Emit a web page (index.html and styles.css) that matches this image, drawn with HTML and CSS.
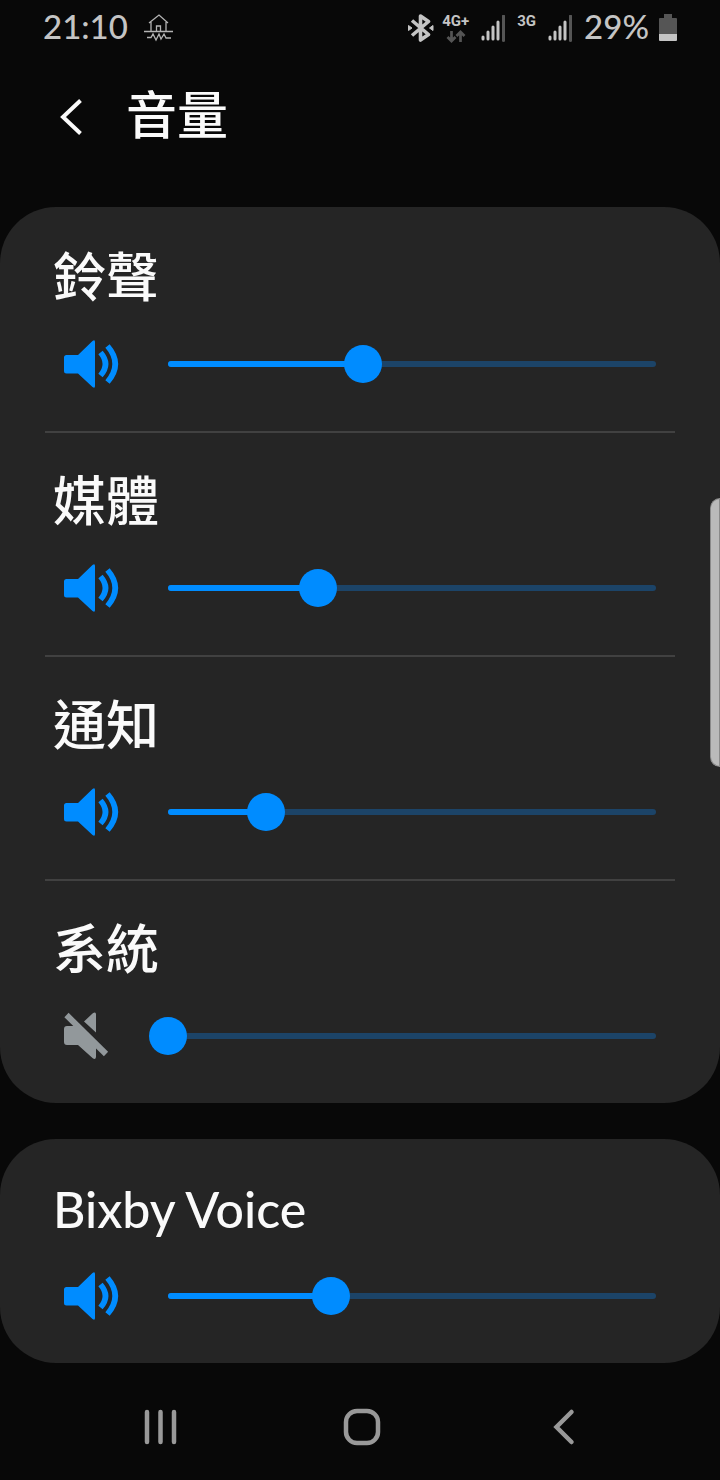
FILE: index.html
```html
<!DOCTYPE html>
<html lang="zh-Hant">
<head>
<meta charset="utf-8">
<meta name="viewport" content="width=device-width, initial-scale=1">
<title>音量</title>
<link rel="stylesheet" href="styles.css">
</head>
<body>
<svg class="defs" aria-hidden="true">
  <symbol id="speaker" viewBox="0 0 56 48">
    <path d="M2.500 15H14L28.500 1Q31 -1 31 2V46Q31 49 28.500 47L14 33.500H2.500Q0 33.500 0 31V17.500Q0 15 2.500 15Z" fill="currentColor"/>
    <path d="M36.500 12.500Q46.500 24 36.500 35.500M43.500 6Q59 24 43.500 42" fill="none" stroke="currentColor" stroke-width="5.700"/>
  </symbol>
  <symbol id="muted" viewBox="0 0 56 48">
    <path d="M20 9.500L28.500 1.500Q32 -1 32 2.500V20.500ZM3 14H11L32 35V45Q31.500 48.500 28.500 46L14 33H3Q0 33 0 30V17Q0 14 3 14Z" fill="currentColor"/>
    <path d="M2.500 3L42 42" fill="none" stroke="currentColor" stroke-width="6"/>
  </symbol>
  <symbol id="signal" viewBox="0 0 24 27">
    <path d="M2 24V22M7 24V17M12 24V12M17 24V7" fill="none" stroke="#c4c4c4" stroke-width="3" stroke-linecap="round"/>
    <path d="M22.500 25.500V1" fill="none" stroke="#555" stroke-width="3" stroke-linecap="round"/>
  </symbol>
</svg>

<header class="status">
  <span class="clock">21:10</span>
  <svg class="quake" viewBox="0 0 30 28" aria-hidden="true">
    <path d="M5 9L15 1L24 9M7 7V17M22 7V17M12.500 17V12H16.500V17M0 17.500H29M3 23.500H7L9 20L12 26L15 20L17 25L20 20L22 24H27" fill="none" stroke="#b4b4b4" stroke-width="1.300"/>
  </svg>
  <div class="status-right">
    <svg class="bluetooth" viewBox="0 0 26 28" aria-hidden="true">
      <path d="M4 6.500L20.500 20.500L12.500 26V2L20.500 7.500L4 21.500" fill="none" stroke="#c4c4c4" stroke-width="3.600" stroke-linejoin="round"/>
      <path d="M0.500 11.500L4 14L0.500 16.500ZM25 11.500L21.500 14L25 16.500Z" fill="#c4c4c4" stroke="#c4c4c4"/>
    </svg>
    <div class="network">
      <span>4G+</span>
      <svg class="arrows" viewBox="0 0 20 13" aria-hidden="true">
        <path d="M5.500 1V11M1.500 7L5.500 11L9.500 7M14.500 12V2M10.500 6L14.500 2L18.500 6" fill="none" stroke="#555" stroke-width="2.700"/>
      </svg>
    </div>
    <svg class="signal" aria-hidden="true"><use href="#signal"/></svg>
    <div class="network"><span>3G</span></div>
    <svg class="signal" aria-hidden="true"><use href="#signal"/></svg>
    <span class="percent">29%</span>
    <svg class="battery" viewBox="0 0 18 28" aria-hidden="true">
      <path d="M5 0H13V4H17Q18 4 18 5V20H0V5Q0 4 1 4H5Z" fill="#555"/>
      <path d="M0 20H18V26Q18 27 17 27H1Q0 27 0 26Z" fill="#c4c4c4"/>
    </svg>
  </div>
</header>

<div class="titlebar">
  <button class="back" type="button" aria-label="返回">
    <svg viewBox="0 0 24 36" aria-hidden="true"><path d="M20.500 1.500L3 18L20.500 34.500" fill="none" stroke="#fafafa" stroke-width="4"/></svg>
  </button>
  <h1>音量</h1>
</div>

<main>
  <section class="card">
    <div class="row">
      <label for="ring">鈴聲</label>
      <div class="control">
        <svg class="icon" aria-hidden="true"><use href="#speaker"/></svg>
        <div class="slider">
          <div class="rail"><div class="fill" style="width:40%"></div></div>
          <input id="ring" type="range" max="150" value="60">
        </div>
      </div>
    </div>
    <div class="row">
      <label for="media">媒體</label>
      <div class="control">
        <svg class="icon" aria-hidden="true"><use href="#speaker"/></svg>
        <div class="slider">
          <div class="rail"><div class="fill" style="width:30.67%"></div></div>
          <input id="media" type="range" max="150" value="46">
        </div>
      </div>
    </div>
    <div class="row">
      <label for="notice">通知</label>
      <div class="control">
        <svg class="icon" aria-hidden="true"><use href="#speaker"/></svg>
        <div class="slider">
          <div class="rail"><div class="fill" style="width:20%"></div></div>
          <input id="notice" type="range" max="150" value="30">
        </div>
      </div>
    </div>
    <div class="row">
      <label for="system">系統</label>
      <div class="control">
        <svg class="icon icon-muted" aria-hidden="true"><use href="#muted"/></svg>
        <div class="slider">
          <div class="rail"><div class="fill" style="width:0%"></div></div>
          <input id="system" type="range" max="150" value="0">
        </div>
      </div>
    </div>
  </section>
  <section class="card">
    <div class="row">
      <label class="latin" for="bixby">Bixby Voice</label>
      <div class="control">
        <svg class="icon" aria-hidden="true"><use href="#speaker"/></svg>
        <div class="slider">
          <div class="rail"><div class="fill" style="width:33.33%"></div></div>
          <input id="bixby" type="range" max="150" value="50">
        </div>
      </div>
    </div>
  </section>
</main>

<nav class="navbar">
  <button type="button" aria-label="最近使用">
    <svg viewBox="0 0 40 40" aria-hidden="true"><path d="M7 5V35M20.500 5V35M34 5V35" fill="none" stroke="#999" stroke-width="4.500" stroke-linecap="round"/></svg>
  </button>
  <button type="button" aria-label="首頁">
    <svg viewBox="0 0 40 40" aria-hidden="true"><rect x="4" y="4" width="32" height="32" rx="11" fill="none" stroke="#999" stroke-width="4.500"/></svg>
  </button>
  <button type="button" aria-label="返回">
    <svg viewBox="0 0 40 40" aria-hidden="true"><path d="M27.500 5L12.500 20L27.500 35" fill="none" stroke="#999" stroke-width="4.500" stroke-linecap="round"/></svg>
  </button>
</nav>
<div class="edge-handle"></div>
</body>
</html>
```
FILE: styles.css
```css
* { box-sizing: border-box; }

body {
  position: relative;
  margin: 0;
  background: #080808;
  color: #fafafa;
  font-family: Lato, "Noto Sans CJK TC", sans-serif;
}

svg { display: block; flex: none; }
.defs { position: absolute; width: 0; height: 0; }

button {
  display: flex;
  align-items: center;
  justify-content: center;
  padding: 0;
  border: 0;
  background: none;
}

.status {
  display: flex;
  align-items: center;
  height: 56px;
  padding: 0 43px;
  color: #c4c4c4;
}
.clock, .percent {
  padding-bottom: 4px;
  font-size: 33px;
  line-height: 52px;
  font-weight: 500;
}
.quake { width: 30px; height: 28px; margin-left: 16px; }
.status-right {
  display: flex;
  align-items: center;
  margin-left: auto;
}
.bluetooth { width: 26px; height: 28px; margin-right: 8px; }
.network {
  display: flex;
  flex-direction: column;
  align-items: center;
  height: 30px;
  font: bold 15px/16px Roboto, sans-serif;
}
.arrows { width: 20px; height: 13px; margin-top: 1px; }
.signal { width: 24px; height: 27px; margin: 0 12px; }
.percent { margin-right: 10px; }
.battery { width: 18px; height: 28px; }

.titlebar {
  display: flex;
  align-items: center;
  height: 151px;
  padding: 0 60px 30px;
}
.back svg { width: 24px; height: 36px; }
h1 {
  margin: 0 0 0 42px;
  padding-bottom: 4px;
  font-size: 51px;
  line-height: 64px;
  font-weight: 500;
}

main {
  display: flex;
  flex-direction: column;
  gap: 36px;
}
.card {
  padding: 0 45px;
  border-radius: 56px;
  background: #252525;
}
.row { padding: 36px 0 43px; }
.row + .row {
  padding-top: 34px;
  border-top: 2px solid #414141;
}
.row label {
  display: block;
  margin-left: 8px;
  font-size: 53px;
  line-height: 68px;
  font-weight: 500;
}
.row .latin { font-size: 50px; }
.control {
  display: flex;
  align-items: center;
  margin-top: 29px;
  padding-left: 19px;
}
.icon {
  width: 56px;
  height: 48px;
  color: #008cff;
}
.icon-muted { color: #92989b; }

.slider {
  display: grid;
  flex: 1;
  align-items: center;
  margin-left: 29px;
}
.rail, .slider input { grid-area: 1 / 1; }
.rail {
  height: 6px;
  margin: 0 19px;
  border-radius: 4px;
  background: #1c4468;
  overflow: hidden;
}
.fill { height: 100%; background: #008cff; }
.slider input {
  appearance: none;
  width: 100%;
  height: 38px;
  margin: 0;
  background: transparent;
  z-index: 1;
}
.slider input::-webkit-slider-thumb {
  appearance: none;
  width: 38px;
  height: 38px;
  border: 0;
  border-radius: 50%;
  background: #008cff;
}

.navbar {
  display: flex;
  justify-content: space-between;
  padding: 44px 136px 33px 140px;
}
.navbar svg { width: 40px; height: 40px; }

.edge-handle {
  position: absolute;
  top: 498px;
  right: 0;
  width: 10px;
  height: 269px;
  border: 1px solid #8a8a8a;
  border-radius: 10px 0 0 10px;
  background: #bababa;
}
```
